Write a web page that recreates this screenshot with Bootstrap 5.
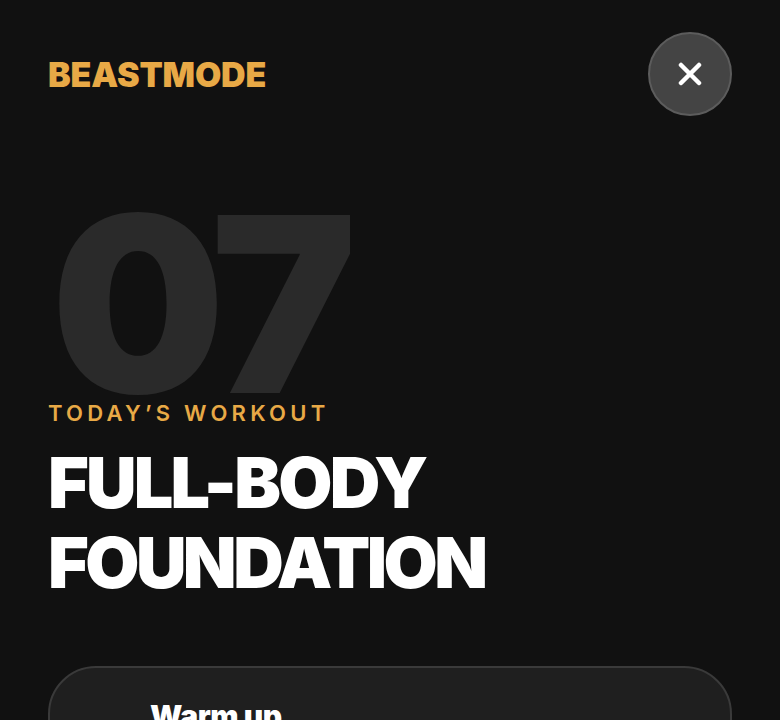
<!DOCTYPE html>
<html lang="en">
<head>
<meta charset="utf-8">
<title>Beastmode</title>
<link href="https://cdn.jsdelivr.net/npm/bootstrap@5.3.0/dist/css/bootstrap.min.css" rel="stylesheet">
<style>
html,body{height:100%;overflow:hidden;}
body{background:#111;font-family:Inter,"Liberation Sans",sans-serif;color:#fff;}
.shell{padding:32px 48px 0;height:720px;overflow:hidden;}
.topbar{height:84px;}
.brand-name{font-size:34px;font-weight:900;color:#e8a946;line-height:1;letter-spacing:-.2px;padding-top:2px;font-variation-settings:"opsz" 32;}
.close-btn{width:84px;height:84px;background:#444;border:2px solid #5c5c5c;color:#fff;}
.hero-num{font-size:245px;font-weight:900;line-height:240px;color:#2a2a2a;letter-spacing:-9.5px;margin-top:68px;height:215px;padding-left:3px;font-variation-settings:"opsz" 32;}
.eyebrow{font-size:22px;font-weight:600;letter-spacing:4.25px;color:#e8a946;line-height:28px;position:relative;}
.workout-title{font-size:70px;font-weight:900;line-height:80px;letter-spacing:-2.8px;margin:16px 0 0;font-variation-settings:"opsz" 32;}
.title-tight{display:block;letter-spacing:-3.6px;}
.warm-card{margin-top:63px;height:200px;border:2px solid #3a3a3a;border-radius:48px;background:#1f1f1f;padding:31px 100px;}
.warm-title{font-size:30px;font-weight:900;line-height:34px;letter-spacing:-.4px;font-variation-settings:"opsz" 32;}
</style>
</head>
<body>
<div class="shell">
  <div class="topbar d-flex justify-content-between align-items-center">
    <div class="brand-name">BEASTMODE</div>
    <button class="close-btn btn rounded-circle d-flex align-items-center justify-content-center p-0" aria-label="Close">
      <svg width="24" height="24" viewBox="0 0 24 24" fill="none" stroke="#fff" stroke-width="4.5" stroke-linecap="round"><path d="M3 3 21 21M21 3 3 21"/></svg>
    </button>
  </div>
  <div class="hero-num">07</div>
  <div class="eyebrow">TODAY’S WORKOUT</div>
  <h1 class="workout-title">FULL-BODY<span class="title-tight">FOUNDATION</span></h1>
  <div class="warm-card"><div class="warm-title">Warm up</div></div>
</div>
<script src="https://cdn.jsdelivr.net/npm/bootstrap@5.3.0/dist/js/bootstrap.bundle.min.js"></script>
</body>
</html>
